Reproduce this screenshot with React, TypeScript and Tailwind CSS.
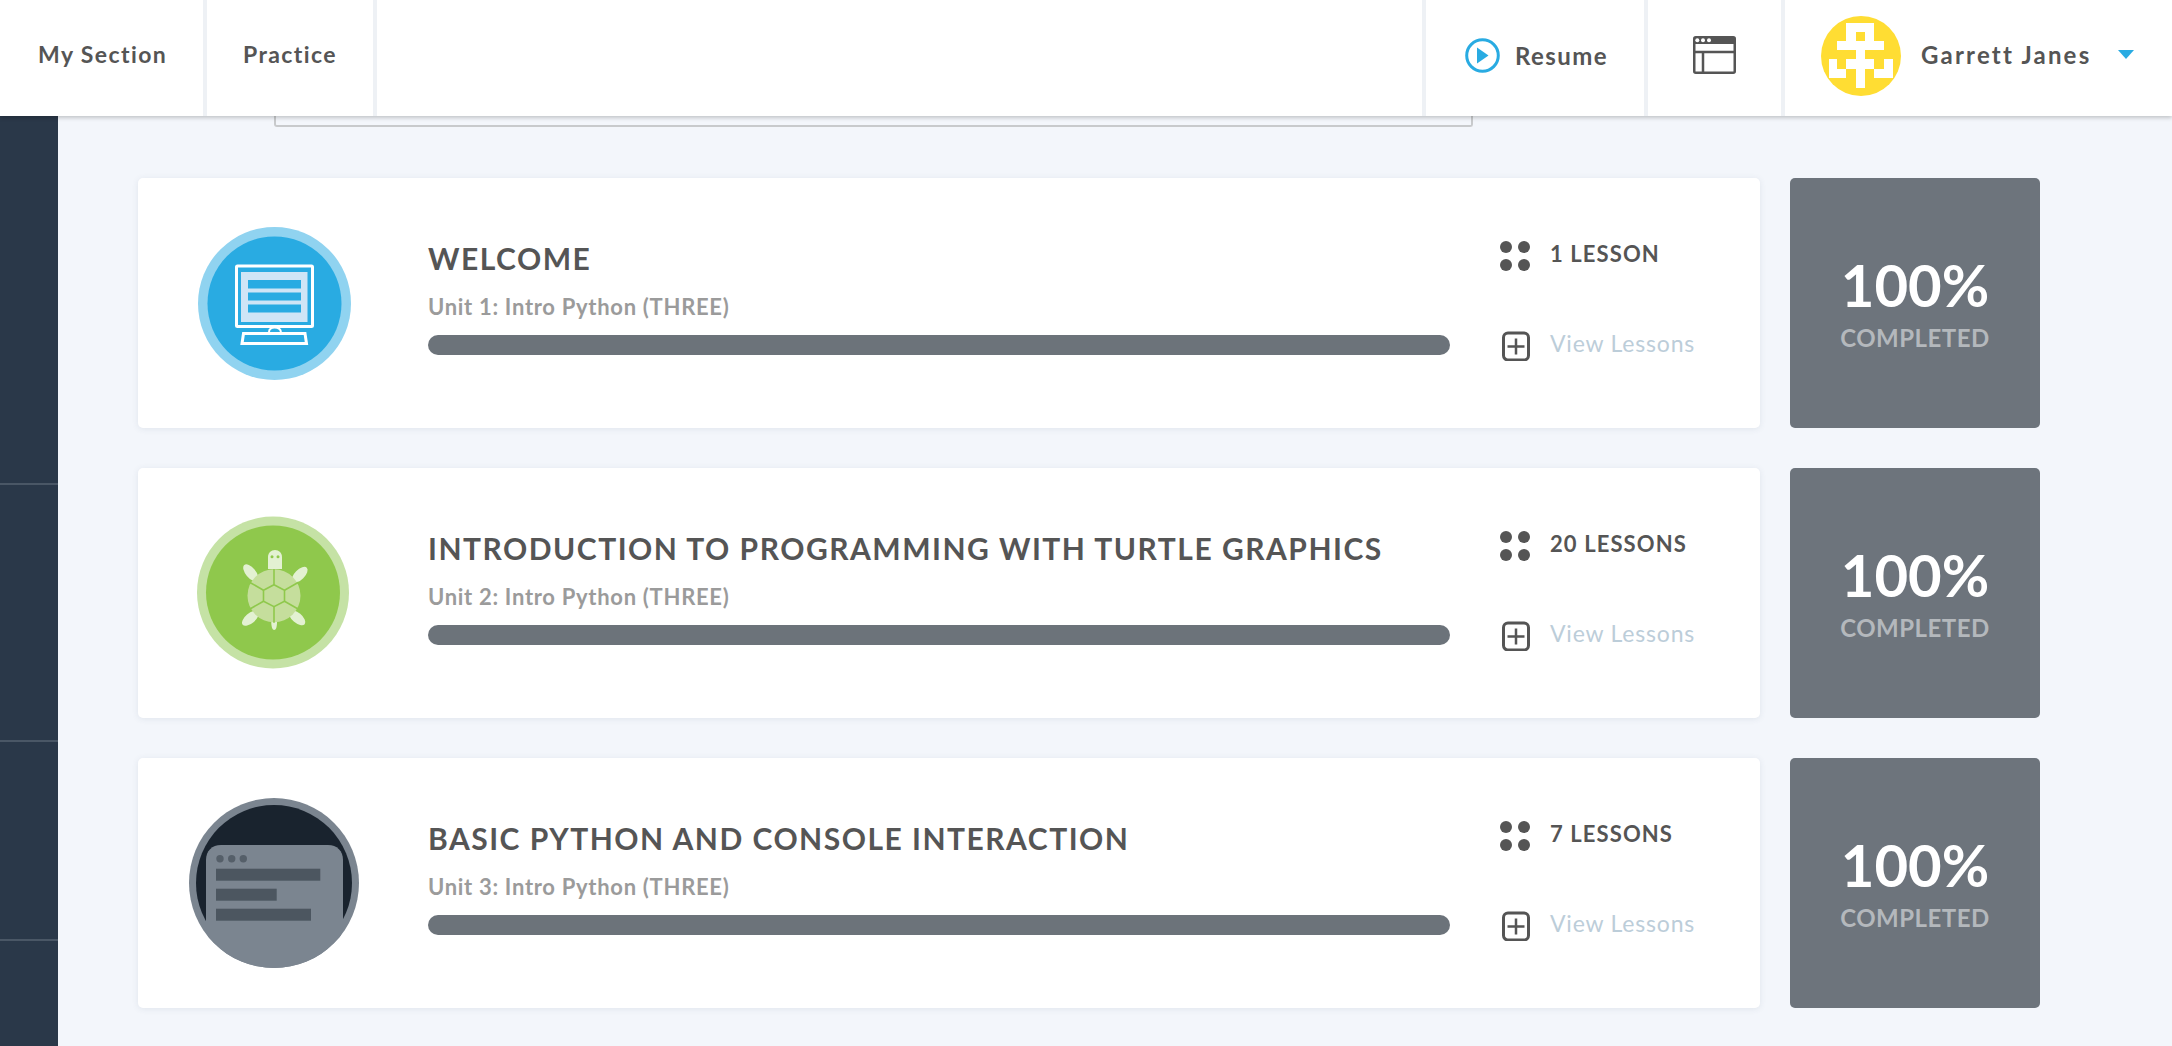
const font = "font-['Lato','Liberation_Sans',sans-serif]";

type Unit = {
  title: string;
  unit: string;
  lessons: string;
  badge: React.ReactNode;
};

function ScreenBadge() {
  return (
    <svg viewBox="0 0 153 153" className="h-[153px] w-[153px]">
      <circle cx="76.5" cy="76.5" r="76.5" fill="#90d3f0" />
      <circle cx="76.5" cy="76.5" r="67" fill="#29abe2" />
      <rect x="38.5" y="39" width="76" height="60.5" rx="1" fill="#29abe2" stroke="#fff" strokeWidth="3" />
      <rect x="43" y="45" width="66.5" height="50" fill="#cfe5f6" />
      <rect x="50" y="53" width="53" height="8.5" fill="#29abe2" />
      <rect x="50" y="65.5" width="53" height="8" fill="#29abe2" />
      <rect x="50" y="77.5" width="53" height="8" fill="#29abe2" />
      <path d="M71 105c0-6 11-6 12 0" fill="none" stroke="#fff" strokeWidth="2" />
      <path d="M45.5 106.5h61.5l1.5 10H44z" fill="#29abe2" stroke="#fff" strokeWidth="3" />
    </svg>
  );
}

function TurtleBadge() {
  return (
    <svg viewBox="0 0 152 153" className="-mt-px -ml-[2px] h-[153px] w-[152px]">
      <circle cx="76" cy="76.5" r="76" fill="#c5e2a5" />
      <circle cx="76" cy="76.5" r="67" fill="#8fc84c" />
      <path d="M71 53V41c0-4 3-7 7-7s7 3 7 7v12z" fill="#e3f1d2" />
      <circle cx="75" cy="40.7" r="1.5" fill="#8fc84c" />
      <circle cx="81" cy="40.7" r="1.5" fill="#8fc84c" />
      <g fill="#e3f1d2">
        <ellipse cx="53.7" cy="56.7" rx="5" ry="10" transform="rotate(-40 53.7 56.7)" />
        <ellipse cx="102.7" cy="58.7" rx="5" ry="10" transform="rotate(45 102.7 58.7)" />
        <ellipse cx="53.3" cy="102.3" rx="5" ry="10" transform="rotate(50 53.3 102.3)" />
        <ellipse cx="100" cy="101.7" rx="5" ry="10" transform="rotate(-50 100 101.7)" />
        <path d="M74.3 106h5.7c0 5-1 8-2.800 8s-2.900-3-2.900-8z" />
      </g>
      <circle cx="77" cy="79.7" r="26.5" fill="#c5de9c" />
      <g stroke="#8fc84c" strokeWidth="1.6" fill="none">
        <path d="M77 68.700l10.500 5.500v11l-10.500 5.500-10.500-5.500v-11z" />
        <path d="M77 53v15.700M87.500 74.200l14-8M87.500 85.200l14 8M77 90.700v16M66.500 85.200l-14 8M66.500 74.200l-14-8" />
      </g>
    </svg>
  );
}

function ConsoleBadge() {
  return (
    <svg viewBox="0 0 170 170" className="-ml-px h-[170px] w-[170px]">
      <defs>
        <clipPath id="console-clip">
          <circle cx="85" cy="85" r="85" />
        </clipPath>
      </defs>
      <circle cx="85" cy="85" r="85" fill="#7b8590" />
      <circle cx="85" cy="85" r="78" fill="#19232e" />
      <g clipPath="url(#console-clip)">
        <path d="M17 130V62c0-9 6-15 15-15h107c9 0 15 6 15 15v68l-10 40H27z" fill="#7b8590" />
      </g>
      <circle cx="31" cy="60.7" r="3.7" fill="#555f69" />
      <circle cx="42.7" cy="60.7" r="3.7" fill="#555f69" />
      <circle cx="54.3" cy="60.7" r="3.7" fill="#555f69" />
      <rect x="27" y="70.7" width="104.3" height="12" fill="#4c5660" />
      <rect x="27" y="90.7" width="60.7" height="12" fill="#4c5660" />
      <rect x="27" y="110.7" width="95" height="12" fill="#4c5660" />
    </svg>
  );
}

function Avatar() {
  return (
    <svg viewBox="0 0 80 80" className="h-20 w-20 shrink-0">
      <circle cx="40" cy="40" r="40" fill="#ffdd33" />
      <path
        fill="#fff"
        d="M25 7h28v18h10v9H16v-9h9zM35 34h9v9h9v10h-9v19h-9V53H25V43h10zM8 43h8v10h9v9H8zM63 43h9v19H53v-9h10z"
      />
      <rect x="35" y="16" width="9" height="9" fill="#ffdd33" />
    </svg>
  );
}

function CompletedBox() {
  return (
    <div className="flex h-[250px] w-[250px] shrink-0 flex-col items-center rounded-[5px] bg-[#6d747c] pt-[72px]">
      <div className="text-[58px] leading-[70px] font-bold text-white">100%</div>
      <div className="mt-[3px] text-[24px] leading-[30px] font-bold tracking-[0.5px] text-[#b4b8bc]">COMPLETED</div>
    </div>
  );
}

function UnitRow({ unit }: { unit: Unit }) {
  return (
    <div className="flex gap-[30px]">
      <div className="flex h-[250px] w-[1622px] items-center rounded-[5px] bg-white shadow-[0_1px_6px_rgba(60,80,110,0.1)]">
        <div className="flex w-[290px] shrink-0 justify-center pr-[18px]">{unit.badge}</div>
        <div className="w-[1022px] shrink-0 pb-[10px]">
          <h2 className="-translate-y-px text-[30px] leading-9 font-bold tracking-[1.5px] text-[#555]">{unit.title}</h2>
          <p className="mt-[17px] text-[22px] leading-[26px] font-bold tracking-[0.7px] text-[#9b9b9b]">{unit.unit}</p>
          <div className="mt-[15px] h-5 rounded-full bg-[#6c737a]" />
        </div>
        <div className="ml-[50px] flex flex-col gap-[56px] pb-[9px]">
          <div className="flex items-center gap-[20px] text-[22px] font-bold tracking-[1.1px] text-[#555]">
            <svg viewBox="0 0 30 30" className="h-[30px] w-[30px] translate-y-[3px]" fill="#555">
              <circle cx="6" cy="6" r="6" />
              <circle cx="24" cy="6" r="6" />
              <circle cx="6" cy="24" r="6" />
              <circle cx="24" cy="24" r="6" />
            </svg>
            {unit.lessons}
          </div>
          <div className="flex items-center gap-[20px] text-[23px] tracking-[0.8px] text-[#bccdd9]">
            <svg viewBox="0 0 30 30" className="h-[30px] w-[30px] translate-y-[3px]" fill="none" stroke="#555" strokeWidth="3">
              <rect x="3.5" y="2" width="25" height="27" rx="4.5" />
              <path d="M16 7.500v16M7.500 15.500h17" strokeWidth="2.5" />
            </svg>
            View Lessons
          </div>
        </div>
      </div>
      <CompletedBox />
    </div>
  );
}

const units: Unit[] = [
  { title: "WELCOME", unit: "Unit 1: Intro Python (THREE)", lessons: "1 LESSON", badge: <ScreenBadge /> },
  {
    title: "INTRODUCTION TO PROGRAMMING WITH TURTLE GRAPHICS",
    unit: "Unit 2: Intro Python (THREE)",
    lessons: "20 LESSONS",
    badge: <TurtleBadge />,
  },
  {
    title: "BASIC PYTHON AND CONSOLE INTERACTION",
    unit: "Unit 3: Intro Python (THREE)",
    lessons: "7 LESSONS",
    badge: <ConsoleBadge />,
  },
];

export default function App() {
  return (
    <div className={`${font} h-[1046px] w-[2172px] overflow-hidden bg-[#f3f6fb]`}>
      <header className="relative z-10 flex h-[116px] bg-white pl-[3px] text-[23px] font-bold tracking-[1.4px] text-[#555] shadow-[0_2px_4px_rgba(0,0,0,0.2)]">
        <div className="flex w-[204px] items-center border-r-4 border-[#eef1f5] pb-2 pl-[35px]">My Section</div>
        <div className="flex w-[170px] items-center border-r-4 border-[#eef1f5] pb-2 pl-[36px]">Practice</div>
        <div className="w-[1049px] border-r-4 border-[#eef1f5]" />
        <div className="flex w-[222px] items-center gap-[15px] border-r-4 border-[#eef1f5] pb-[5px] pl-[39px] text-[24px]">
          <svg viewBox="0 0 35 35" className="h-[35px] w-[35px]">
            <circle cx="17.5" cy="17.5" r="15.8" fill="none" stroke="#29abe2" strokeWidth="3" />
            <path d="M12 9.500v16l11.500-8z" fill="#29abe2" />
          </svg>
          Resume
        </div>
        <div className="flex w-[137px] items-center border-r-4 border-[#eef1f5] pb-[6px] pl-[45px]">
          <svg viewBox="0 0 43 38" className="h-[38px] w-[43px]">
            <rect x="1.25" y="1.25" width="40.5" height="35.5" rx="1.5" fill="none" stroke="#555" strokeWidth="2.5" />
            <rect x="1" y="1" width="41" height="7" fill="#555" />
            <circle cx="4.3" cy="4.3" r="2" fill="#fff" />
            <circle cx="10" cy="4.3" r="2" fill="#fff" />
            <circle cx="16" cy="4.3" r="2" fill="#fff" />
            <path d="M1 16h41M10 16v21" stroke="#555" strokeWidth="2.5" />
          </svg>
        </div>
        <div className="flex flex-1 items-center pb-[4px] pl-[36px] text-[24px] tracking-[2.2px]">
          <Avatar />
          <span className="ml-[20px] pb-[2px]">Garrett Janes</span>
          <svg viewBox="0 0 16 9" className="mb-[3px] ml-[27px] h-[9px] w-4">
            <path d="M0 0h16l-8 9z" fill="#29abe2" />
          </svg>
        </div>
      </header>
      <div className="flex h-[930px]">
        <aside className="w-[58px] shrink-0 bg-[#2a3849]">
          <div className="h-[369px] border-b-2 border-[#4a5766]" />
          <div className="h-[257px] border-b-2 border-[#4a5766]" />
          <div className="h-[199px] border-b-2 border-[#4a5766]" />
        </aside>
        <main className="flex-1 pl-[80px]">
          <div className="ml-[136px] h-[11px] w-[1199px] rounded-b-[3px] border-x-2 border-b-2 border-[#c8cacc]" />
          <div className="mt-[51px] flex flex-col gap-10">
            {units.map((unit) => (
              <UnitRow key={unit.title} unit={unit} />
            ))}
          </div>
        </main>
      </div>
    </div>
  );
}
